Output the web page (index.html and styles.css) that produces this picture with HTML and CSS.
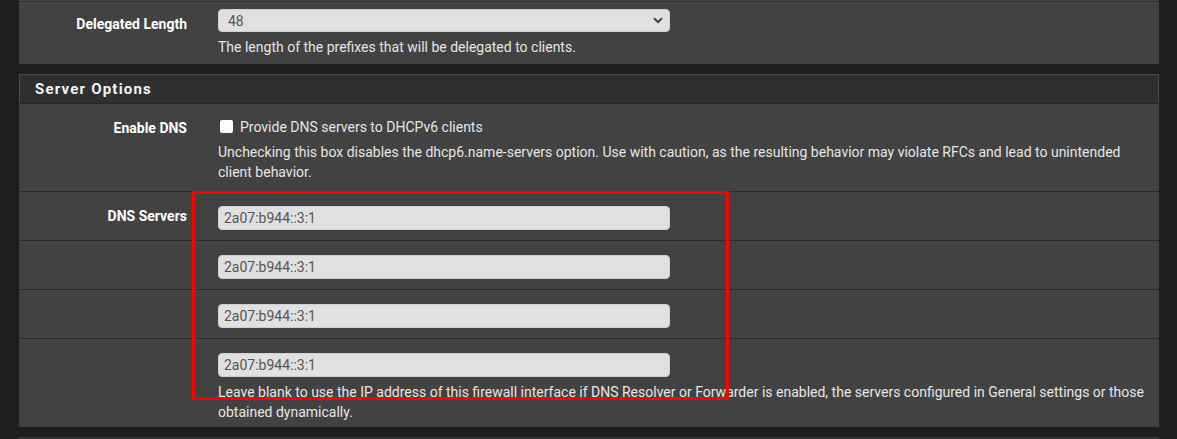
FILE: index.html
```html
<!DOCTYPE html>
<html lang="en">
<head>
    <meta charset="UTF-8" />
    <title>Services: DHCPv6 Server</title>
    <link rel="stylesheet" href="styles.css">
</head>
<body>
    <div class="panel panel-top">
        <div class="form-group first">
            <label class="col-label">Delegated Length</label>
            <div class="col-input">
                <div class="select">
                    <span>48</span>
                    <svg class="chevron" width="10" height="7" viewBox="0 0 10 7">
                        <path d="M1 1.2 L5 5 L9 1.2" fill="none" stroke="#444" stroke-width="2"/>
                    </svg>
                </div>
                <p class="help">The length of the prefixes that will be delegated to clients.</p>
            </div>
        </div>
    </div>

    <div class="panel">
        <div class="panel-heading">Server Options</div>

        <div class="form-group check-row">
            <label class="col-label">Enable DNS</label>
            <div class="col-input">
                <label class="checkbox"><span class="box"></span>Provide DNS servers to DHCPv6 clients</label>
                <p class="help">Unchecking this box disables the dhcp6.name-servers option. Use with caution, as the resulting behavior may violate RFCs and lead to unintended client behavior.</p>
            </div>
        </div>

        <div class="dns-block">
            <div class="form-group">
                <label class="col-label dns-label">DNS Servers</label>
                <div class="col-input">
                    <input class="field" type="text" value="2a07:b944::3:1">
                </div>
            </div>
            <div class="form-group">
                <label class="col-label"></label>
                <div class="col-input">
                    <input class="field" type="text" value="2a07:b944::3:1">
                </div>
            </div>
            <div class="form-group">
                <label class="col-label"></label>
                <div class="col-input">
                    <input class="field" type="text" value="2a07:b944::3:1">
                </div>
            </div>
            <div class="form-group last">
                <label class="col-label"></label>
                <div class="col-input">
                    <input class="field" type="text" value="2a07:b944::3:1">
                    <p class="help">Leave blank to use the IP address of this firewall interface if DNS Resolver or Forwarder is enabled, the servers configured in General settings or those obtained dynamically.</p>
                </div>
            </div>

            <!-- highlight box drawn over the DNS rows -->
            <div class="highlight"></div>
        </div>
    </div>

    <div class="panel panel-next"></div>
</body>
</html>
```

FILE: styles.css
```css
body {
    margin: 0;
    padding: 0 18px 0 19px;
    background: #1e1e1e;
    font-family: Roboto, "Liberation Sans", Arial, sans-serif;
    font-size: 14px;
    color: #e6e6e6;
    overflow: hidden;
}

.panel {
    width: 1140px;
    background: #424242;
    margin-bottom: 10px;
}

.panel-top {
    border-top: 1px solid #2f2f2f;
    box-shadow: 0 -1px 0 #424242;
    margin-top: 1px;
}

.panel-heading {
    height: 28px;
    line-height: 28px;
    padding-left: 15px;
    background: #2f2f2f;
    border: 1px solid #4a4a4a;
    border-bottom: 1px solid #262626;
    font-size: 15px;
    font-weight: bold;
    letter-spacing: 1.2px;
    color: #f2f2f2;
}

.form-group {
    display: grid;
    grid-template-columns: 168px 1fr;
    column-gap: 31px;
    padding: 14px 15px 10px 0;
    border-bottom: 1px solid #2b2b2b;
}

.form-group.first {
    padding-top: 7px;
    padding-bottom: 7px;
    border-bottom: none;
}

.form-group.first .help {
    margin-bottom: 0;
}

.form-group.first .col-label {
    line-height: 23px;
    padding-top: 4px;
}

.form-group.check-row {
    padding-top: 12px;
    padding-bottom: 14px;
}

.form-group.last {
    padding-bottom: 10px;
    border-bottom: none;
}

.col-label {
    text-align: right;
    font-weight: bold;
    color: #ffffff;
    line-height: 24px;
}

.col-label.dns-label {
    line-height: 20px;
}

.col-input {
    min-width: 0;
}

.select,
.field {
    box-sizing: border-box;
    width: 452px;
    height: 24px;
    background: #e0e0e0;
    border: 1px solid #cfcfcf;
    border-radius: 4px;
    color: #555;
    font-family: inherit;
    font-size: 14px;
    padding: 0 5px;
}

.select {
    display: flex;
    align-items: center;
    justify-content: space-between;
    height: 23px;
    padding: 0 6px 0 9px;
}

.field {
    display: block;
    outline: none;
}

.help {
    margin: 5px 0 -5px;
    line-height: 20px;
    color: #e6e6e6;
}

.checkbox {
    display: flex;
    align-items: center;
    height: 21px;
    padding-left: 2px;
}

.checkbox .box {
    width: 13px;
    height: 13px;
    background: #fff;
    border-radius: 2px;
    margin-right: 7px;
}

.dns-block {
    position: relative;
}

.highlight {
    position: absolute;
    left: 173px;
    top: -1px;
    width: 531px;
    height: 203px;
    border: 3px solid #ff0000;
    pointer-events: none;
}

.panel-next {
    height: 4px;
    background: #2f2f2f;
    border-top: 1px solid #3a3a3a;
}
```
